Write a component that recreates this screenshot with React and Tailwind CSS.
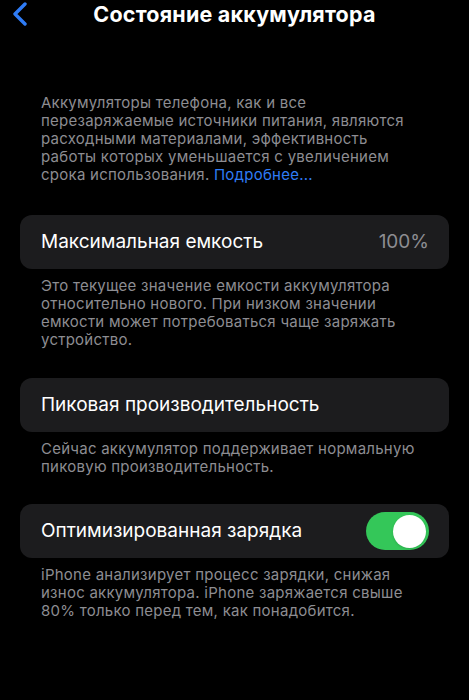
const font = { fontFamily: 'Inter, "Noto Sans", sans-serif' };

function Card({ children }) {
    return (
        <div className="mx-5 h-[54px] rounded-xl bg-[#1c1c1e] pl-[21px] pr-5 flex items-center justify-between">
            {children}
        </div>
    );
}

function Footnote({ children }) {
    return (
        <p className="mx-[41px] mt-[8px] text-[15px] leading-[18px] text-[#8d8d92] tracking-[0.25px]">
            {children}
        </p>
    );
}

export default function App() {
    return (
        <div className="min-h-[700px] w-[469px] bg-black overflow-hidden" style={font}>
            {/* Nav bar */}
            <div className="relative h-[28px] flex items-center justify-center">
                <svg className="absolute left-[11px] top-[2px] w-[18px] h-[24px]" viewBox="0 0 18 24" fill="none">
                    <path d="M14 2 L4 12 L14 22" stroke="#2f7cf6" strokeWidth="3.4" strokeLinecap="round" strokeLinejoin="round" />
                </svg>
                <h1 className="text-[21.5px] font-bold text-white tracking-[0.2px]">Состояние аккумулятора</h1>
            </div>

            {/* Intro */}
            <p className="mx-[41px] mt-[66px] text-[15px] leading-[18px] text-[#8d8d92] tracking-[0.25px]">
                Аккумуляторы телефона, как и все<br />
                перезаряжаемые источники питания, являются<br />
                расходными материалами, эффективность<br />
                работы которых уменьшается с увеличением<br />
                срока использования. <span className="text-[#2f7cf6]">Подробнее...</span>
            </p>

            <div className="mt-[31px]">
                <Card>
                    <span className="text-[19px] text-white">Максимальная емкость</span>
                    <span className="text-[19px] text-[#8d8d92]">100%</span>
                </Card>
                <Footnote>
                    Это текущее значение емкости аккумулятора<br />
                    относительно нового. При низком значении<br />
                    емкости может потребоваться чаще заряжать<br />
                    устройство.
                </Footnote>
            </div>

            <div className="mt-[29px]">
                <Card>
                    <span className="text-[19px] text-white">Пиковая производительность</span>
                </Card>
                <Footnote>
                    Сейчас аккумулятор поддерживает нормальную<br />
                    пиковую производительность.
                </Footnote>
            </div>

            <div className="mt-[28px]">
                <Card>
                    <span className="text-[19px] text-white">Оптимизированная зарядка</span>
                    <div className="w-[63px] h-[38px] rounded-full bg-[#34c759] flex items-center justify-end pr-[3px]">
                        <div className="w-[33px] h-[33px] rounded-full bg-white shadow" />
                    </div>
                </Card>
                <Footnote>
                    iPhone анализирует процесс зарядки, снижая<br />
                    износ аккумулятора. iPhone заряжается свыше<br />
                    80% только перед тем, как понадобится.
                </Footnote>
            </div>
        </div>
    );
}
